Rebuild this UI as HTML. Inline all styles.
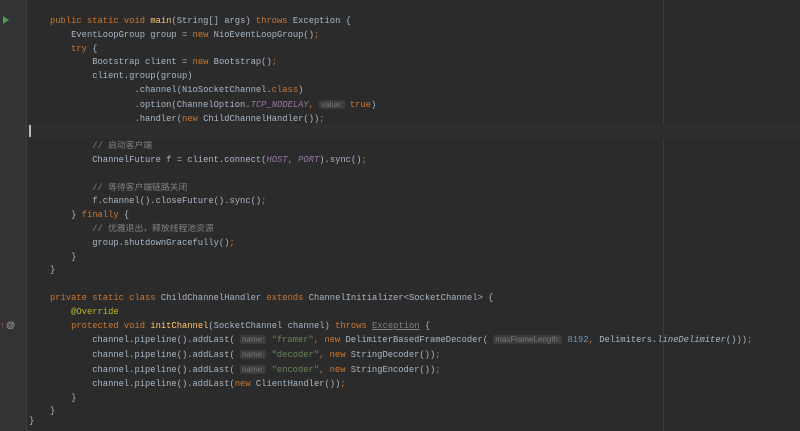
<!DOCTYPE html><html><head><meta charset="utf-8"><style>
body{margin:0;width:800px;height:431px;background:#2b2b2b;overflow:hidden;position:relative}
#g{position:absolute;left:0;top:0;width:26px;height:431px;background:#313335;border-right:1px solid #3c3f41}
#m{position:absolute;left:663px;top:0;width:1px;height:431px;background:#3a3a3a}
#cl{position:absolute;left:27px;top:124px;width:773px;height:14px;background:#2e2e2e}
#cur{position:absolute;left:29px;top:125px;width:2px;height:12px;background:#bbb}
pre{position:absolute;left:50px;top:15px;margin:0;font-family:"Liberation Mono","Noto Sans CJK SC",monospace;font-size:8.8px;line-height:13.8px;color:#a9b7c6}
.k{color:#cc7832}.s{color:#6a8759}.n{color:#6897bb}.f{color:#9876aa;font-style:italic}.d{color:#ffc66d}.a{color:#bbb529}.c{color:#808080}.i{font-style:italic}
.h{background:#3b3b3b;color:#787878;border-radius:2px;font-family:"Liberation Sans",sans-serif;font-size:8px;padding:0 2px}
.u{text-decoration:underline;color:#808080}
</style></head><body>
<div id="g"></div><div id="m"></div><div id="cl"></div><div id="cur"></div>
<svg style="position:absolute;left:0;top:0" width="30" height="431"><polygon points="3,16 3,24 9,20" fill="#499c54"/><text x="0" y="328" font-size="9" fill="#c75450" font-family="Liberation Sans">↑</text><text x="6" y="328" font-size="9" fill="#aaa" font-family="Liberation Sans">@</text></svg>
<pre><span class="k">public static void </span><span class="d">main</span>(String[] args) <span class="k">throws </span>Exception {
    EventLoopGroup group = <span class="k">new </span>NioEventLoopGroup()<span class="k">;</span>
    <span class="k">try </span>{
        Bootstrap client = <span class="k">new </span>Bootstrap()<span class="k">;</span>
        client.group(group)
                .channel(NioSocketChannel.<span class="k">class</span>)
                .option(ChannelOption.<span class="f">TCP_NODELAY</span><span class="k">, </span><span class="h">value:</span> <span class="k">true</span>)
                .handler(<span class="k">new </span>ChildChannelHandler())<span class="k">;</span>

        <span class="c">// 启动客户端</span>
        ChannelFuture f = client.connect(<span class="f">HOST</span><span class="k">, </span><span class="f">PORT</span>).sync()<span class="k">;</span>

        <span class="c">// 等待客户端链路关闭</span>
        f.channel().closeFuture().sync()<span class="k">;</span>
    } <span class="k">finally </span>{
        <span class="c">// 优雅退出，释放线程池资源</span>
        group.shutdownGracefully()<span class="k">;</span>
    }
}

<span class="k">private static class </span>ChildChannelHandler <span class="k">extends </span>ChannelInitializer&lt;SocketChannel&gt; {
    <span class="a">@Override</span>
    <span class="k">protected void </span><span class="d">initChannel</span>(SocketChannel channel) <span class="k">throws </span><span class="u">Exception</span> {
        channel.pipeline().addLast( <span class="h">name:</span> <span class="s">"framer"</span><span class="k">, new </span>DelimiterBasedFrameDecoder( <span class="h">maxFrameLength:</span> <span class="n">8192</span><span class="k">, </span>Delimiters.<span class="i">lineDelimiter</span>()))<span class="k">;</span>
        channel.pipeline().addLast( <span class="h">name:</span> <span class="s">"decoder"</span><span class="k">, new </span>StringDecoder())<span class="k">;</span>
        channel.pipeline().addLast( <span class="h">name:</span> <span class="s">"encoder"</span><span class="k">, new </span>StringEncoder())<span class="k">;</span>
        channel.pipeline().addLast(<span class="k">new </span>ClientHandler())<span class="k">;</span>
    }
}
</pre>
<pre style="left:29px;top:415px">}</pre>
</body></html>
